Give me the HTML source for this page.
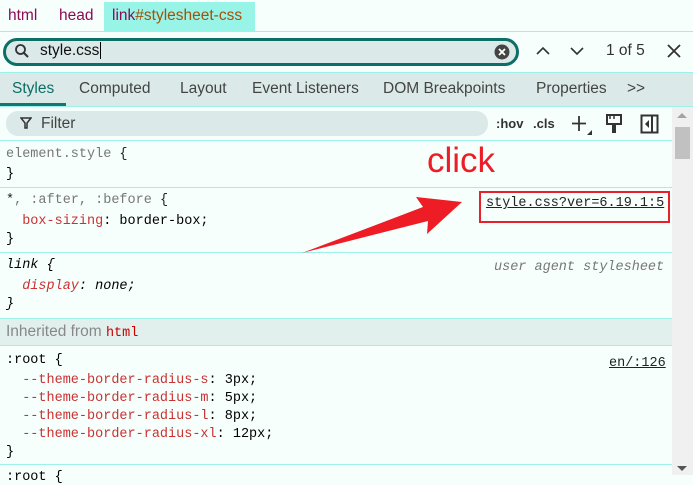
<!DOCTYPE html>
<html><head><style>
*{box-sizing:border-box;margin:0;padding:0}
body{width:693px;height:475px;overflow:hidden;background:#f7fffd;font-family:"Liberation Sans",sans-serif;position:relative}
.a{position:absolute}
.m{font-family:"Liberation Mono",monospace;font-size:13.5px;white-space:pre;position:absolute;left:6px;margin-top:2px}
.hl{border-top:1px solid #9ef0e8;position:absolute;left:0;width:672px}
.r{color:#c80000}.g{color:#777}.p{color:#c83232}
</style></head><body>
<div class="a" style="left:0;top:0;width:693px;height:32px;border-bottom:1px solid #9ef0e8"></div>
<div class="a" style="left:104px;top:2px;width:151px;height:29px;background:#97f4e7"></div>
<div class="a" style="left:8px;top:7px;font-size:15.5px;color:#8b0b55">html</div>
<div class="a" style="left:59px;top:7px;font-size:15.5px;color:#8b0b55">head</div>
<div class="a" style="left:112px;top:7px;font-size:15.5px;color:#8b0b55">link<span style="color:#a0520a">#stylesheet-css</span></div>

<div class="a" style="left:3px;top:38px;width:516px;height:28px;border:3px solid #0d6e66;border-radius:14px;background:#dbeae8"></div>
<svg class="a" style="left:14px;top:43px" width="16" height="16"><circle cx="6.5" cy="6.5" r="4.5" fill="none" stroke="#333" stroke-width="1.8"/><line x1="10" y1="10" x2="14" y2="14" stroke="#333" stroke-width="2"/></svg>
<div class="a" style="left:40px;top:42px;font-size:15.5px;color:#111">style.css<span style="border-left:1px solid #000;margin-left:1px"></span></div>
<svg class="a" style="left:494px;top:44px" width="16" height="16"><circle cx="8" cy="8" r="7.5" fill="#444"/><path d="M5 5L11 11M11 5L5 11" stroke="#fff" stroke-width="1.8"/></svg>
<svg class="a" style="left:535px;top:45px" width="16" height="12"><path d="M2 9L8 3L14 9" fill="none" stroke="#333" stroke-width="1.6"/></svg>
<svg class="a" style="left:569px;top:45px" width="16" height="12"><path d="M2 3L8 9L14 3" fill="none" stroke="#333" stroke-width="1.6"/></svg>
<div class="a" style="left:606px;top:42px;font-size:15.5px;color:#333">1 of 5</div>
<svg class="a" style="left:666px;top:43px" width="16" height="16"><path d="M2 2L14 14M14 2L2 14" stroke="#333" stroke-width="1.8"/></svg>

<div class="a" style="left:0;top:72px;width:693px;height:35px;background:#dbeae8;border-top:1px solid #9ef0e8;border-bottom:1px solid #9ef0e8"></div>
<div class="a" style="left:0;top:103px;width:66px;height:3px;background:#0d7a72"></div>
<div class="a" style="top:80px;font-size:15.5px;color:#444;left:0;width:693px">
<span class="a" style="left:12px;color:#0b6e66">Styles</span><span class="a" style="left:79px">Computed</span><span class="a" style="left:180px">Layout</span><span class="a" style="left:252px">Event Listeners</span><span class="a" style="left:383px">DOM Breakpoints</span><span class="a" style="left:536px">Properties</span><span class="a" style="left:627px">&gt;&gt;</span></div>

<div class="a" style="left:6px;top:111px;width:482px;height:25px;background:#dbeae8;border-radius:12px"></div>
<svg class="a" style="left:20px;top:117px" width="12" height="12"><path d="M1 1H11L7 6V11H5V6Z" fill="none" stroke="#333" stroke-width="1.5"/></svg>
<div class="a" style="left:41px;top:115px;font-size:15.5px;color:#444">Filter</div>
<div class="a" style="left:496px;top:116px;font-size:13px;font-weight:bold;color:#333">:hov</div>
<div class="a" style="left:533px;top:116px;font-size:13px;font-weight:bold;color:#333">.cls</div>
<svg class="a" style="left:570px;top:114px" width="24" height="22"><path d="M9 2V17M2 9.5H16" stroke="#333" stroke-width="1.8"/><path d="M22 16V21H17Z" fill="#333"/></svg>
<svg class="a" style="left:605px;top:114px" width="18" height="20"><rect x="2" y="1" width="14" height="9" fill="none" stroke="#333" stroke-width="2"/><path d="M5 1V5M9 1V5" stroke="#333" stroke-width="1.5"/><rect x="7" y="10" width="4" height="9" fill="#333"/></svg>
<svg class="a" style="left:640px;top:114px" width="20" height="20"><rect x="1.5" y="1.5" width="16" height="17" fill="none" stroke="#333" stroke-width="2"/><path d="M12 2V18" stroke="#333" stroke-width="2"/><path d="M9 6L5 10L9 14Z" fill="#333"/></svg>

<div class="a" style="left:672px;top:107px;width:21px;height:368px;background:#f0f0f0"></div>
<div class="a" style="left:675px;top:127px;width:15px;height:32px;background:#c1c1c1"></div>
<svg class="a" style="left:676px;top:111px" width="12" height="8"><path d="M1 7L6 2L11 7Z" fill="#a3a3a3"/></svg>
<svg class="a" style="left:676px;top:465px" width="12" height="8"><path d="M1 1H11L6 6Z" fill="#555"/></svg>

<div class="hl" style="top:140px"></div>
<div class="m g" style="top:145px">element.style <span style="color:#222">{</span></div>
<div class="m" style="top:165px">}</div>
<div class="hl" style="top:187px"></div>
<div class="m g" style="top:191px"><span style="color:#222">*</span>, :after, :before <span style="color:#222">{</span></div>
<div class="m" style="top:212px">  <span class="p">box-sizing</span>: border-box;</div>
<div class="m" style="top:230px">}</div>
<div class="hl" style="top:252px"></div>
<div class="m" style="top:256px;font-style:italic">link {</div>
<div class="m" style="top:277px;font-style:italic">  <span class="p">display</span>: none;</div>
<div class="m" style="top:295px;font-style:italic">}</div>
<div class="m g" style="top:258px;left:494px;font-style:italic">user agent stylesheet</div>
<div class="a" style="left:0;top:318px;width:672px;height:28px;background:#e2f0ed;border-top:1px solid #9ef0e8;border-bottom:1px solid #9ef0e8"></div>
<div class="a" style="left:6px;top:323px;font-size:15.5px;color:#888">Inherited from <span style="font-family:'Liberation Mono',monospace;font-size:13.5px;color:#c80000">html</span></div>
<div class="m" style="top:351px">:root {</div>
<div class="m" style="top:371px">  <span class="p">--theme-border-radius-s</span>: 3px;</div>
<div class="m" style="top:389px">  <span class="p">--theme-border-radius-m</span>: 5px;</div>
<div class="m" style="top:407px">  <span class="p">--theme-border-radius-l</span>: 8px;</div>
<div class="m" style="top:425px">  <span class="p">--theme-border-radius-xl</span>: 12px;</div>
<div class="m" style="top:443px">}</div>
<div class="m" style="top:354px;left:609px;text-decoration:underline;color:#222">en/:126</div>
<div class="hl" style="top:464px"></div>
<div class="m" style="top:468px">:root {</div>

<div class="m" style="top:194px;left:486px;text-decoration:underline;color:#222">style.css?ver=6.19.1:5</div>
<div class="a" style="left:479px;top:191px;width:191px;height:32px;border:2px solid #e8202a"></div>
<div class="a" style="left:427px;top:141px;font-size:35px;color:#ee1c25">click</div>
<svg class="a" style="left:0;top:0" width="693" height="475"><polygon points="302,253 423,207 416,197 462,202 427,234 428,221" fill="#ee1c25"/></svg>
</body></html>
